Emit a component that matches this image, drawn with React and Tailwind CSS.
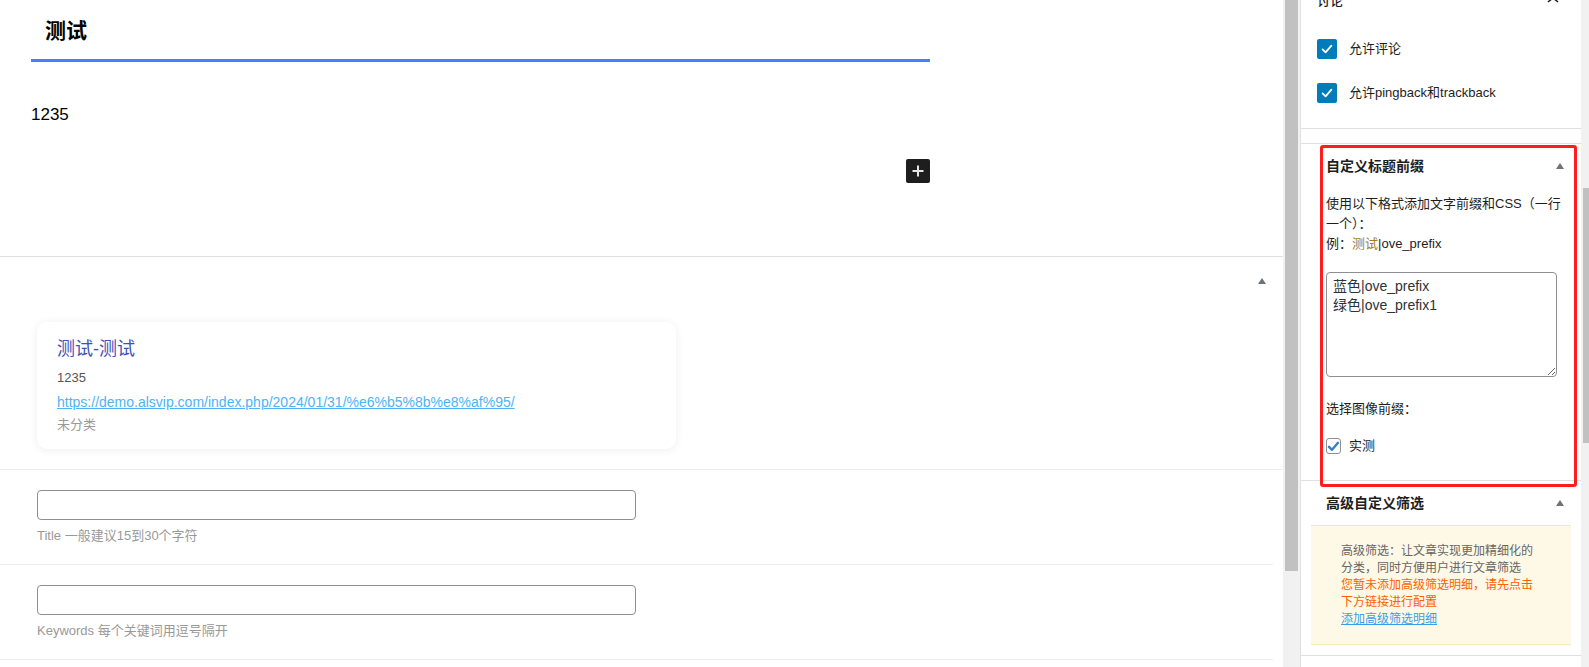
import { useState } from 'react';

const Triangle = () => (
    <svg width="8" height="6" viewBox="0 0 8 6" className="block">
        <polygon points="0,6 8,6 4,0" fill="#6e7378" />
    </svg>
);

const BlueCheck = () => (
    <span className="flex h-[20px] w-[20px] shrink-0 items-center justify-center rounded-[2px] bg-[#007cba]">
        <svg width="20" height="20" viewBox="0 0 20 20">
            <path d="M5.6 10.4l3 3 5.8-6.8" fill="none" stroke="#fff" strokeWidth="1.8" strokeLinecap="round" strokeLinejoin="round" />
        </svg>
    </span>
);

const Field = ({ hint, trimmed }) => (
    <section className={`h-[95px] border-b border-[#ececec] pt-[20px] ${trimmed ? 'mr-[10px]' : ''}`}>
        <input className="ml-[37px] block h-[30px] w-[599px] rounded-[4px] border border-[#8c8f94] bg-white px-2 text-[14px] outline-none" />
        <p className="ml-[37px] mt-[7px] text-[13px] leading-[18px] text-[#999]">{hint}</p>
    </section>
);

const App = () => {
    const [prefixes, setPrefixes] = useState('蓝色|ove_prefix\n绿色|ove_prefix1');

    return (
        <div className="flex h-[667px] w-[1589px] overflow-hidden bg-white font-['Liberation_Sans','Noto_Sans_CJK_SC',sans-serif] text-[#1e1e1e]">
            <main className="w-[1283px] shrink-0">
                <section className="h-[257px] border-b border-[#e0e0e0]">
                    <div className="ml-[31px] w-[899px]">
                        <h1 className="h-[62px] border-b-[3px] border-[#4185f4] pl-[14px] pt-[16px] text-[21px] font-bold leading-[29px] text-black">
                            测试
                        </h1>
                        <p className="mt-[40px] text-[17px] leading-[26px] text-black">1235</p>
                        <div className="mt-[31px] flex justify-end">
                            <button className="flex h-[24px] w-[24px] items-center justify-center rounded-[2px] bg-[#1e1e1e]">
                                <svg width="14" height="14" viewBox="0 0 14 14">
                                    <path d="M7 1.5v11M1.5 7h11" stroke="#e6e6e6" strokeWidth="2" />
                                </svg>
                            </button>
                        </div>
                    </div>
                </section>

                <section className="h-[213px] border-b border-[#ececec]">
                    <div className="flex h-[48px] items-center justify-end pr-[17px]">
                        <Triangle />
                    </div>
                    <div className="ml-[37px] mt-[17px] h-[127px] w-[639px] rounded-[10px] bg-white pl-[20px] pt-[14px] shadow-[0_1px_10px_rgba(0,0,0,0.07)]">
                        <h3 className="text-[18px] leading-[26px] text-[#3f51b5]">测试-测试</h3>
                        <p className="mt-[6px] text-[13px] leading-[20px] text-[#555]">1235</p>
                        <a href="#" className="mt-[4px] block text-[14px] leading-[20px] text-[#4db3f5] underline">
                            https://demo.alsvip.com/index.php/2024/01/31/%e6%b5%8b%e8%af%95/
                        </a>
                        <p className="mt-[3px] text-[13px] leading-[20px] text-[#999]">未分类</p>
                    </div>
                </section>

                <Field hint="Title 一般建议15到30个字符" trimmed />
                <Field hint="Keywords 每个关键词用逗号隔开" trimmed />
            </main>

            <div className="w-[17px] shrink-0 bg-[#f1f1f1] px-[2px]">
                <div className="h-[571px] bg-[#c1c1c1]" />
            </div>

            <aside className="flex w-[289px] shrink-0 border-l border-[#e0e0e0]">
                <div className="w-[280px] shrink-0">
                    <div className="flow-root h-[129px] border-b border-[#e0e0e0]">
                        <div className="-mt-[9px] flex h-[20px] items-center justify-between pl-[16px] pr-[16px]">
                            <span className="text-[13px] font-medium leading-[20px]">讨论</span>
                            <svg width="24" height="24" viewBox="0 0 24 24">
                                <path d="M6.5 12.4L12 8l5.5 4.4-.9 1.2L12 10l-4.6 3.6-.9-1.2z" fill="#1e1e1e" />
                            </svg>
                        </div>
                        <label className="mt-[28px] flex h-[20px] items-center gap-[12px] pl-[16px] text-[13px]">
                            <BlueCheck />
                            允许评论
                        </label>
                        <label className="mt-[24px] flex h-[20px] items-center gap-[12px] pl-[16px] text-[13px]">
                            <BlueCheck />
                            允许pingback和trackback
                        </label>
                    </div>

                    <div className="h-[15px] border-b border-[#e0e0e0]" />

                    <div className="relative h-[337px] border-b border-[#e0e0e0]">
                        <div className="flex h-[44px] items-center justify-between pl-[25px] pr-[17px]">
                            <h2 className="text-[14px] font-bold">自定义标题前缀</h2>
                            <Triangle />
                        </div>
                        <div className="mt-[6px] pl-[25px] text-[13px] leading-[20px]">
                            <div>使用以下格式添加文字前缀和CSS（一行</div>
                            <div>一个）：</div>
                            <div>
                                例：<span className="text-[#a27c1e]">测试</span>|ove_prefix
                            </div>
                        </div>
                        <textarea
                            value={prefixes}
                            onChange={(e) => setPrefixes(e.target.value)}
                            className="ml-[25px] mt-[18px] block h-[105px] w-[231px] rounded-[4px] border border-[#8c8f94] px-[6px] py-[4px] text-[14px] leading-[19px] text-[#2c3338] outline-none"
                        />
                        <p className="mt-[22px] pl-[25px] text-[13px] leading-[20px]">选择图像前缀：</p>
                        <label className="mt-[19px] flex h-[16px] items-center gap-[8px] pl-[25px] text-[13px]">
                            <span className="flex h-[16px] w-[15px] items-center justify-center rounded-[3px] border border-[#8c8f94] bg-white">
                                <svg width="13" height="13" viewBox="0 0 13 13">
                                    <path d="M2 6.8l3 3 6-7" fill="none" stroke="#3582c4" strokeWidth="2.4" strokeLinecap="round" strokeLinejoin="round" />
                                </svg>
                            </span>
                            实测
                        </label>
                        <div className="pointer-events-none absolute left-[19px] top-[1px] h-[342px] w-[257px] rounded-[3px] border-[3px] border-[#ff1c1c]" />
                    </div>

                    <div className="h-[175px] border-b border-[#e0e0e0]">
                        <div className="flex h-[44px] items-center justify-between pl-[25px] pr-[17px]">
                            <h2 className="text-[14px] font-bold">高级自定义筛选</h2>
                            <Triangle />
                        </div>
                        <div className="mx-[10px] h-[120px] border-y border-[#f8e7bf] bg-[#fef8e6] pl-[30px] pt-[17px] text-[12px] leading-[17px]">
                            <div className="text-[#666]">高级筛选：让文章实现更加精细化的</div>
                            <div className="text-[#666]">分类，同时方便用户进行文章筛选</div>
                            <div className="text-[#ff6000]">您暂未添加高级筛选明细，请先点击</div>
                            <div className="text-[#ff6000]">下方链接进行配置</div>
                            <a href="#" className="text-[#3a9ee8] underline">添加高级筛选明细</a>
                        </div>
                    </div>
                </div>

                <div className="w-[8px] shrink-0 bg-[#f1f1f1] pl-[2px] pt-[188px]">
                    <div className="h-[255px] bg-[#c1c1c1]" />
                </div>
            </aside>
        </div>
    );
};

export default App;
